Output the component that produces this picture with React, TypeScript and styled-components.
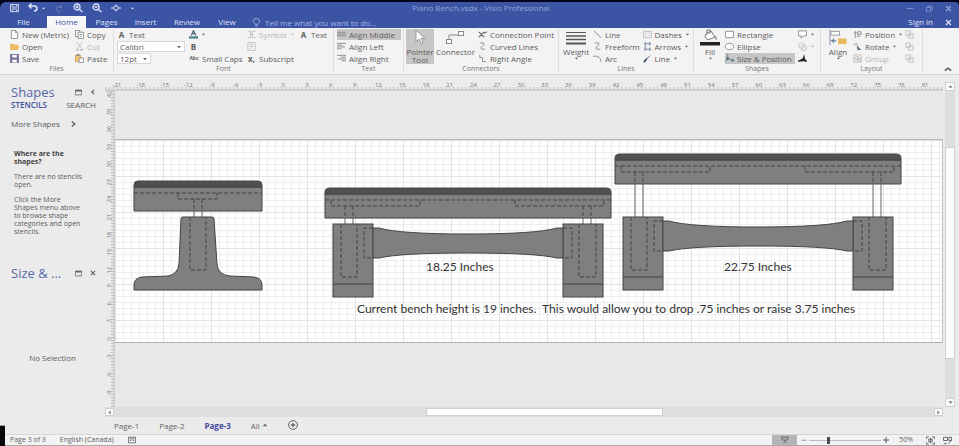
import React from "react";
import styled, { createGlobalStyle, css } from "styled-components";

const Global = createGlobalStyle`
  * { box-sizing: border-box; }
  html, body { margin: 0; background: #000; }
  body, button, input, select {
    font-family: "Open Sans", "Noto Sans", sans-serif;
    font-size: 8px;
    line-height: 11px;
    color: #5c5c5c;
  }
  button, input, select { margin: 0; padding: 0; border: 0; background: none; }
  h1, h2, p { margin: 0; }
`;

const Shell = styled.div`
  min-height: 100vh;
  display: flex;
  flex-direction: column;
  background: #ebebeb;
  border-top: 2px solid #04051c;
  overflow: hidden;
`;

/* ---------- title bar and tabs ---------- */

const Header = styled.header`
  background: #3c54a4;
  color: #dfe4f5;
  border-radius: 6px 4px 0 0;
  box-shadow: 0 -6px 0 #04051c;
`;

const TitleRow = styled.div`
  display: grid;
  grid-template-columns: 1fr auto 1fr;
  align-items: center;
  height: 12px;
  padding: 0 7px 0 10px;
`;

const QuickBar = styled.div`
  display: flex;
  align-items: center;
  gap: 9px;
  height: 8px;
`;

const WindowTitle = styled.h1`
  font-size: 8px;
  line-height: 12px;
  font-weight: 400;
  color: #93a3da;
`;

const WindowButtons = styled(QuickBar)`
  justify-content: flex-end;
  gap: 12px;
  color: #93a3da;
`;

const IconButton = styled.button<{ $dim?: boolean }>`
  display: inline-flex;
  align-items: center;
  gap: 3px;
  color: inherit;
  opacity: ${(p) => (p.$dim ? 0.3 : 1)};
`;

const TabRow = styled.nav`
  display: flex;
  align-items: flex-end;
  height: 14px;
`;

const Tab = styled.button<{ $active?: boolean; $width: number }>`
  width: ${(p) => p.$width}px;
  height: 12px;
  line-height: 12px;
  color: ${(p) => (p.$active ? "#3c54a4" : "#dfe4f5")};
  background: ${(p) => (p.$active ? "#f7f7f9" : "transparent")};
`;

const Tell = styled.label`
  display: flex;
  align-items: center;
  gap: 4px;
  height: 12px;
  margin-left: 8px;
  flex: 1;
  color: #a7b4e2;
  input {
    width: 160px;
    color: #a7b4e2;
    outline: none;
  }
  input::placeholder { color: #a7b4e2; opacity: 1; }
`;

const SignIn = styled.a`
  color: #e6eaf8;
  text-decoration: none;
  line-height: 12px;
  margin-right: 12px;
`;

const CloseDoc = styled(IconButton)`
  height: 12px;
  margin-right: 7px;
`;

/* ---------- ribbon ---------- */

const Ribbon = styled.section`
  display: flex;
  height: 47px;
  background: #f3f3f3;
  border-bottom: 1px solid #d4d4d4;
`;

const GroupBox = styled.div<{ $width: number }>`
  flex: 0 0 ${(p) => p.$width}px;
  display: flex;
  flex-direction: column;
  margin: 1px 0 2px;
  border-right: 1px solid #dedede;
`;

const GroupBody = styled.div`
  display: flex;
  height: 35px;
`;

const GroupName = styled.div`
  text-align: center;
  line-height: 9px;
  font-size: 7px;
  color: #777;
`;

const Column = styled.div<{ $width: number; $gap?: number }>`
  flex: 0 0 ${(p) => p.$width}px;
  display: flex;
  flex-direction: column;
  align-items: flex-start;
  gap: 1px;
  margin-left: ${(p) => p.$gap ?? 0}px;
`;

const Command = styled.button<{ $active?: boolean; $disabled?: boolean; $fill?: boolean }>`
  display: flex;
  align-items: center;
  gap: 3px;
  height: 11px;
  white-space: nowrap;
  ${(p) => p.$fill && css`width: 100%;`}
  ${(p) => p.$disabled && css`color: #b4b4b4;`}
  ${(p) => p.$active && css`background: #c6c6c6;`}
`;

const Tall = styled.button<{ $active?: boolean; $width: number; $gap: number }>`
  flex: 0 0 ${(p) => p.$width}px;
  margin-left: ${(p) => p.$gap}px;
  display: flex;
  flex-direction: column;
  align-items: center;
  height: 35px;
  line-height: 8px;
  background: ${(p) => (p.$active ? "#c6c6c6" : "transparent")};
  svg:first-child { margin-bottom: 2px; }
`;

const PickerBox = styled.label<{ $width: number }>`
  display: flex;
  align-items: center;
  width: ${(p) => p.$width}px;
  height: 11px;
  background: #fdfdfd;
  border: 1px solid #d8d8d8;
  padding: 0 2px;
  select {
    flex: 1;
    min-width: 0;
    appearance: none;
    outline: none;
    line-height: 9px;
    height: 9px;
  }
`;

const Collapse = styled(IconButton)`
  margin-left: auto;
  align-self: flex-end;
  padding: 0 7px 1px 0;
`;

/* ---------- body ---------- */

const Body = styled.main`
  flex: 1;
  display: grid;
  grid-template-columns: 105px minmax(0, 1fr);
`;

const Side = styled.aside`
  display: flex;
  flex-direction: column;
  padding: 9px 9px 0 11px;
`;

const PanelHead = styled.div`
  display: flex;
  align-items: center;
  gap: 8px;
  height: 16px;
  h2 {
    flex: 1;
    font-size: 13px;
    line-height: 16px;
    font-weight: 400;
    color: #5468a8;
    white-space: nowrap;
  }
`;

const PanelTabs = styled.div`
  display: flex;
  justify-content: space-between;
  height: 9px;
  button { line-height: 9px; }
  button:first-child { color: #3f4f9c; font-weight: 600; }
`;

const MoreShapes = styled.button`
  display: flex;
  align-items: center;
  gap: 10px;
  margin: 9px 0 20px;
`;

const Help = styled.div`
  display: flex;
  flex-direction: column;
  gap: 7px;
  padding-left: 3px;
  margin-top: 1px;
  font-size: 7px;
  line-height: 8px;
  height: 115px;
  p { white-space: nowrap; }
  p:first-child { font-weight: 700; color: #444; }
`;

const HelpLine = styled.span`
  display: block;
  height: 8px;
`;

const NoSelection = styled.p`
  margin-top: 71px;
  text-align: center;
  padding-right: 2px;
`;

const Workspace = styled.div`
  display: grid;
  grid-template-columns: 10px minmax(0, 1fr) 16px;
  grid-template-rows: 9px minmax(0, 1fr) 10px 17px;
  padding-top: 7px;
`;

const TopRuler = styled.div`
  grid-column: 1 / 3;
  display: grid;
  grid-template-columns: repeat(35, minmax(0, 1fr));
  padding-right: 6px;
  border-bottom: 2px solid #cfcfcf;
  font-size: 6px;
  line-height: 7px;
  text-align: center;
  color: #777;
  background: repeating-linear-gradient(90deg, #bbb 0 1px, transparent 1px 4px) 0 100% / 100% 2px no-repeat;
`;

const LeftRuler = styled.div`
  display: flex;
  flex-direction: column;
  border-right: 2px solid #cfcfcf;
  font-size: 6px;
  color: #777;
  overflow: hidden;
  background: repeating-linear-gradient(180deg, #bbb 0 1px, transparent 1px 3px) 100% 0 / 2px 100% no-repeat;
  span {
    flex: 1 1 0;
    writing-mode: vertical-rl;
    transform: rotate(180deg);
    text-align: end;
    line-height: 8px;
  }
`;

const Canvas = styled.div`
  background: #e8e8e8;
  padding-top: 48px;
`;

const Sheet = styled.div`
  position: relative;
  height: 204px;
  overflow: hidden;
  border-top: 1px solid #b8b8b8;
  border-bottom: 1px solid #b0b0b0;
  border-right: 1px solid #c4c4c4;
  background:
    repeating-linear-gradient(90deg, #e2e2e2 0 1px, transparent 1px 48px),
    repeating-linear-gradient(180deg, #e2e2e2 0 1px, transparent 1px 36px),
    repeating-linear-gradient(90deg, #eeeeee 0 1px, transparent 1px 8px),
    repeating-linear-gradient(180deg, #eeeeee 0 1px, transparent 1px 6px),
    #fefefe;
  svg { display: block; }
`;

const Note = styled.span<{ $x: number; $y: number }>`
  position: absolute;
  left: ${(p) => p.$x}px;
  top: ${(p) => p.$y}px;
  font-family: Lato, "Open Sans", sans-serif;
  font-size: 12px;
  line-height: 16px;
  color: #333;
  white-space: pre;
`;

const ScrollV = styled.div`
  grid-row: 1 / 4;
  grid-column: 3;
  display: flex;
  flex-direction: column;
  width: 10px;
  margin: 0 0 10px 2px;
  background: #dedede;
`;

const ScrollH = styled.div`
  grid-column: 1 / 3;
  display: flex;
  background: #dedede;
  padding: 1px 0;
`;

const Arrow = styled.button`
  flex: 0 0 9px;
  min-width: 9px;
  display: flex;
  align-items: center;
  justify-content: center;
  background: #fafafa;
  border: 1px solid #d0d0d0;
`;

const Gap = styled.div<{ $grow: number }>`
  flex: ${(p) => p.$grow} 1 0;
`;

const Thumb = styled.div<{ $grow: number }>`
  flex: ${(p) => p.$grow} 1 0;
  background: #fdfdfd;
  border: 1px solid #cfcfcf;
`;

const PageTabs = styled.nav`
  grid-column: 1 / 4;
  display: flex;
  align-items: center;
  gap: 20px;
  padding: 0 0 1px 9px;
`;

const PageTab = styled.button<{ $active?: boolean }>`
  display: flex;
  align-items: center;
  gap: 2px;
  color: ${(p) => (p.$active ? "#3f4a9e" : "#666")};
  font-weight: ${(p) => (p.$active ? 700 : 400)};
`;

const Status = styled.footer`
  position: relative;
  display: flex;
  align-items: center;
  height: 12px;
  padding: 0 7px 0 10px;
  background: #f2f2f2;
  border-top: 1px solid #d6d6d6;
  border-bottom: 1px solid #a9a9a9;
  font-size: 7px;
  line-height: 10px;
  &::before {
    content: "";
    position: absolute;
    left: 0;
    bottom: -1px;
    width: 5px;
    height: 20px;
    background: #080808;
    border-top: 1px solid #999;
  }
`;

const StatusText = styled.span`
  margin-right: 14px;
`;

const Presentation = styled.button`
  display: flex;
  align-items: center;
  justify-content: center;
  width: 25px;
  height: 10px;
  margin-left: auto;
  margin-right: 4px;
  background: #b5b5b5;
`;

const Zoom = styled.input`
  appearance: none;
  width: 72px;
  height: 10px;
  margin: 0 2px;
  outline: none;
  background: linear-gradient(#bbb, #bbb) center / 100% 1px no-repeat;
  &::-webkit-slider-thumb {
    appearance: none;
    width: 3px;
    height: 7px;
    background: #4a4a4a;
  }
`;

const Percent = styled.span`
  margin: 0 13px 0 10px;
`;

const StatusIcons = styled.div`
  display: flex;
  gap: 8px;
`;

/* ---------- icons ---------- */

const G = "#8a8a8a";
const L = "#bdbdbd";

const art: Record<string, React.ReactNode> = {
  save: <><path d="M.5 .5H9.5V8.5H.5Z" /><path d="M2.5 .5V3.5H7.5V.5M2.5 8.5V5.5H7.5V8.5" /></>,
  undo: <path d="M3.5 .5L1 3L3.5 5.5M1 3H6Q9 3 9 5.5T6 8" strokeWidth="1.5" />,
  redo: <path d="M7 1V4H4M7 4A3 3 0 1 0 7 7" />,
  zoomIn: <><circle cx="4" cy="4" r="3" strokeWidth="1.3" /><path d="M6.3 6.3L9.5 9M2.5 4H5.5M4 2.5V5.5" strokeWidth="1.3" /></>,
  zoomOut: <><circle cx="4" cy="4" r="3" strokeWidth="1.3" /><path d="M6.3 6.3L9.5 9M2.5 4H5.5" strokeWidth="1.3" /></>,
  touch: <><ellipse cx="5" cy="5" rx="2.5" ry="2" /><path d="M0 5H2.5M7.5 5H10M5 1.5V3M5 7V8.5" /></>,
  caret: <path d="M2 3.5H8L5 7Z" fill="currentColor" stroke="none" />,
  up: <path d="M1 7H9L5 3Z" fill="currentColor" stroke="none" />,
  chevUp: <path d="M1 7L5 4L9 7" strokeWidth="2" />,
  left: <path d="M7 1V9L3 5Z" fill="currentColor" stroke="none" />,
  right: <path d="M3 1V9L7 5Z" fill="currentColor" stroke="none" />,
  down: <path d="M1 3H9L5 7Z" fill="currentColor" stroke="none" />,
  chevRight: <path d="M3 1L8 5L3 9" strokeWidth="2.2" />,
  chevLeft: <path d="M7 1.5L3 5L7 8.5" strokeWidth="2" />,
  min: <path d="M1 5.5H9" />,
  restore: <path d="M.5 3.5H6.5V9.5H.5ZM3 3.5V1.5H9V7H6.5" />,
  close: <path d="M1.5 1.5L8.5 8.5M8.5 1.5L1.5 8.5" strokeWidth="1.8" />,
  bulb: <><path d="M3.5 7C3.5 5.5 1.5 5 1.5 3.5A3.5 3 0 0 1 8.5 3.5C8.5 5 6.5 5.5 6.5 7Z" /><path d="M3.5 9H6.5" /></>,
  page: <path d="M1.5 .5H6L8.5 3V9.5H1.5ZM6 .5V3H8.5" stroke={G} fill="#fff" />,
  open: <path d="M0 2H4L5 3H9V4.5H10L9 9H0Z" fill="#eebc62" stroke="none" />,
  saveC: <><path d="M.5 .5H9.5V9.5H.5Z" fill="#77739c" stroke="#77739c" /><path d="M2.5 1H7.5V4H2.5ZM2.5 6.5H7.5V9.5H2.5Z" fill="#fff" stroke="none" /></>,
  copy: <><path d="M.5 .5H5.5V7.5H.5Z" stroke={G} /><path d="M3.5 2.5H9.5V9.5H3.5Z" fill="#fff" stroke={G} /><path d="M5 5H8M5 7H8" stroke={G} /></>,
  cut: <path d="M2 0L7 7M8 0L3 7M1.5 8A1.3 1.3 0 1 0 4 8ZM6 8A1.3 1.3 0 1 0 8.5 8Z" stroke={L} />,
  paste: <><path d="M.5 1.5H6.5V8.5H.5Z" fill="#efc57e" stroke="#d7a34e" /><path d="M2 0H5V2H2Z" fill={G} stroke="none" /><path d="M4.5 4.5H9.5V9.5H4.5Z" fill="#fff" stroke={G} /></>,
  colorA: <><path d="M2.5 6L5 .5L7.5 6M3.5 4H6.5" stroke="#4b6877" strokeWidth="1.3" /><path d="M0 7H10V9.5H0Z" fill="#4e7f86" stroke="none" /></>,
  symbol: <path d="M.5 1.5H4V8.5H.5M9.5 1.5H6V8.5H9.5M4 5H6" stroke={L} />,
  textBox: <path d="M1 .5H9V9.5H1ZM3 3H7M3 5H7M3 7H5" stroke={L} />,
  alignL: <path d="M0 1.5H10M0 3.5H6M0 5.5H9M0 7.5H5" stroke={G} />,
  alignM: <path d="M0 2.5H10M0 4.5H10M0 6.5H10" stroke={G} />,
  alignR: <path d="M0 1.5H10M4 3.5H10M1 5.5H10M5 7.5H10" stroke={G} />,
  cross: <path d="M1 2L7 8M7 2L1 8M7 3.5L9.5 2" stroke="#666" strokeWidth="1.3" />,
  curve: <path d="M2 1H6Q8 3 5 4.5T4 8H8" stroke={G} />,
  angle: <path d="M2 1V4H5V8.5H9" stroke={G} />,
  line: <path d="M1 1L9 8.5" stroke={G} />,
  arc: <path d="M0 2.5Q8 1 9 8.5" stroke={G} />,
  dashes: <path d="M.5 1.5H9.5V8.5H.5ZM2 3.5H4M6 3.5H8M2 6H4M6 6H8" stroke={L} />,
  arrows: <path d="M1 2H9M1 8H9M2.500 0V4M7.500 0V4M2.500 4V10M7.500 6V10" stroke="#7387a0" />,
  pen: <path d="M9.5 .5L5 5L3 9L0 9.5L2 6L5 4Z" fill="#42526b" stroke="none" />,
  rect: <path d="M.5 1.5H9.5V8.5H.5Z" stroke={G} fill="#fff" />,
  ellipse: <ellipse cx="5" cy="5" rx="4.5" ry="3.5" stroke={G} fill="#fff" />,
  sizePos: <><path d="M3 0V5L0 9M3 5L9 7" stroke="#6b7d8c" /><circle cx="3" cy="5" r="1.5" fill="#4b6877" stroke="none" /><circle cx="8.500" cy="7" r="1.300" fill="#4b6877" stroke="none" /></>,
  callout: <path d="M.5 1H9.5V6.5H6L3.5 9V6.5H.5Z" stroke={G} fill="#fff" />,
  union: <><circle cx="4" cy="4" r="3" stroke={L} /><circle cx="6.5" cy="6.5" r="3" stroke={L} /></>,
  jet: <path d="M7 0L7.5 5L10 8V9L6.5 8L0 8.5V7.5L5 5Z" fill="#222" stroke="none" />,
  position: <path d="M1 3H4M2.5 1V9M5 2H9V5H5ZM4 7H8" stroke={G} />,
  rotate: <><path d="M1 4Q2 1 5 2" stroke={G} /><path d="M4 3L9 9H5Z" fill="#566d80" stroke="none" /></>,
  group: <path d="M1 1H9V9H1ZM3 3H6V6H3ZM5 5H8V8H5Z" stroke={L} />,
  front: <path d="M1 1H6V6H1ZM4 4H9V9H4Z" stroke={L} fill="#f3f3f3" />,
  win: <><path d="M.5 1.5H9.5V8.5H.5Z" /><path d="M.5 2.5H9.5" strokeWidth="2" /></>,
  plus: <><circle cx="5" cy="5" r="4.4" /><path d="M2.8 5H7.2M5 2.8V7.2" strokeWidth="1.3" /></>,
  macro: <path d="M.5 1.5H9.5V8.5H.5ZM2 3.5H8M2 5.5H4M6 5.5H8" />,
  fit: <path d="M.5 3V1H3M7 1H9.5V3M9.5 7V9H7M3 9H.5V7M3 3.5H7V6.5H3ZM5 2V8" />,
  panes: <path d="M.5 1.5H5V5H.5ZM6.5 1.5H9.5V5H6.5ZM1 8.5H4M6 8.5L9 5.5" />,
  present: <path d="M0 1.5H10M1.5 2V5H8.5V2M5 5V7L3 9M5 7L7 9" />,
};

const Icon = ({ n, s = 9 }: { n: string; s?: number }) => (
  <svg width={s} height={s} viewBox="0 0 10 10" fill="none" stroke="currentColor" aria-hidden="true">
    {art[n]}
  </svg>
);

const LetterA = styled.b<{ $small?: boolean }>`
  width: ${(p) => (p.$small ? 10 : 9)}px;
  font-size: ${(p) => (p.$small ? 5 : 8)}px;
  text-align: center;
`;

type CmdProps = {
  icon?: string;
  text?: string;
  drop?: boolean;
  active?: boolean;
  disabled?: boolean;
  fill?: boolean;
  label?: string;
  lead?: React.ReactNode;
};

const Cmd = ({ icon, text, drop, active, disabled, fill, label, lead }: CmdProps) => (
  <Command $active={active} $disabled={disabled} $fill={fill} aria-label={label}>
    {lead}
    {icon && <Icon n={icon} />}
    {text && <span>{text}</span>}
    {drop && <Icon n="caret" s={5} />}
  </Command>
);

const Group = ({ name, width, children }: { name: string; width: number; children: React.ReactNode }) => (
  <GroupBox $width={width}>
    <GroupBody>{children}</GroupBody>
    <GroupName>{name}</GroupName>
  </GroupBox>
);

const Picker = ({ label, value, width }: { label: string; value: string; width: number }) => (
  <PickerBox $width={width}>
    <select aria-label={label} defaultValue={value}><option>{value}</option></select>
    <Icon n="caret" s={6} />
  </PickerBox>
);

const HelpText = ({ lines }: { lines: string[] }) => (
  <p>{lines.map((line) => <HelpLine key={line}>{line}</HelpLine>)}</p>
);

/* ---------- drawing ---------- */

const FILL = "#7f7f7f";
const INK = "#444";

const FrontBench = ({ x, seat, leg }: { x: number; seat: number; leg: number }) => (
  <g transform={`translate(${x} 0)`} stroke={INK} fill={FILL}>
    {[20, 258].map((p) => (
      <path key={p} d={`M${p} ${seat + 30}V${leg}M${p + 8} ${seat + 30}V${leg}`} stroke="#666" />
    ))}
    <path d={`M0 ${seat + 6}V${seat + 30}H286V${seat + 6}Z`} />
    <path d={`M0 ${seat + 6}V${seat + 4}Q0 ${seat} 5 ${seat}H281Q286 ${seat} 286 ${seat + 4}V${seat + 6}Z`} fill="#505050" />
    <rect x="8" y={leg} width="40" height="73" />
    <rect x="238" y={leg} width="40" height="73" />
    <path d={`M8 ${leg + 60}H48M238 ${leg + 60}H278`} />
    <path
      d={`M48 ${leg + 4}H54Q75 ${leg + 10} 143 ${leg + 10}Q211 ${leg + 10} 232 ${leg + 4}H238V${leg + 34}H232Q211 ${leg + 29} 143 ${leg + 29}Q75 ${leg + 29} 54 ${leg + 34}H48Z`}
    />
    <g fill="none" strokeDasharray="4 2">
      <path d={`M0 ${seat + 12}H286M6 ${seat + 12}V${seat + 18}H95V${seat + 12}M190 ${seat + 12}V${seat + 18}H279V${seat + 12}`} />
      <path d={`M20 ${seat + 18}V${seat + 30}M28 ${seat + 18}V${seat + 30}M258 ${seat + 18}V${seat + 30}M266 ${seat + 18}V${seat + 30}`} />
      <path d={`M16 ${leg}V${leg + 53}H32V${leg}M254 ${leg}V${leg + 53}H271V${leg}`} />
      <path d={`M48 ${leg + 4}H39V${leg + 34}H48M238 ${leg + 4}H247V${leg + 34}H238`} />
    </g>
  </g>
);

const SideBench = () => (
  <g stroke={INK} fill={FILL}>
    <path d="M194 211V217M202 211V217" stroke="#666" />
    <path d="M134 187V211H262V187Z" />
    <path d="M134 187V185Q134 181 138 181H258Q262 181 262 185V187Z" fill="#505050" />
    <path d="M183 217H212Q214 217 214 219L217 264Q218 275 230 276L254 277Q262 278 262 285V290H134V285Q134 278 142 277L168 276Q178 274 179 264L181 219Q181 217 183 217Z" />
    <path
      d="M134 193H262M178 193V199H217V193M194 199V211M202 199V211M190 217V270H206V217"
      fill="none"
      strokeDasharray="4 2"
    />
  </g>
);

const rulerX = Array.from({ length: 35 }, (_, i) => -21 + i * 3);
const rulerY = Array.from({ length: 18 }, (_, i) => 42 - i * 3);

export default function App() {
  return (
    <Shell>
      <Global />
      <Header>
        <TitleRow>
          <QuickBar>
            <IconButton aria-label="Save"><Icon n="save" /></IconButton>
            <IconButton aria-label="Undo"><Icon n="undo" s={10} /><Icon n="caret" s={5} /></IconButton>
            <IconButton aria-label="Redo" $dim><Icon n="redo" /></IconButton>
            <IconButton aria-label="Zoom in"><Icon n="zoomIn" s={10} /></IconButton>
            <IconButton aria-label="Zoom out"><Icon n="zoomOut" s={10} /></IconButton>
            <IconButton aria-label="Touch mode"><Icon n="touch" s={10} /></IconButton>
            <IconButton aria-label="Customize toolbar"><Icon n="caret" s={5} /></IconButton>
          </QuickBar>
          <WindowTitle>Piano Bench.vsdx - Visio Professional</WindowTitle>
          <WindowButtons>
            <IconButton aria-label="Minimize"><Icon n="min" s={8} /></IconButton>
            <IconButton aria-label="Restore"><Icon n="restore" s={7} /></IconButton>
            <IconButton aria-label="Close"><Icon n="close" s={7} /></IconButton>
          </WindowButtons>
        </TitleRow>
        <TabRow>
          <Tab $width={47}>File</Tab>
          <Tab $width={39} $active>Home</Tab>
          <Tab $width={41}>Pages</Tab>
          <Tab $width={37}>Insert</Tab>
          <Tab $width={46}>Review</Tab>
          <Tab $width={34}>View</Tab>
          <Tell>
            <Icon n="bulb" />
            <input placeholder="Tell me what you want to do..." aria-label="Tell me what you want to do" />
          </Tell>
          <SignIn href="#">Sign in</SignIn>
          <CloseDoc aria-label="Close document"><Icon n="close" s={7} /></CloseDoc>
        </TabRow>
      </Header>

      <Ribbon>
        <Group name="Files" width={114}>
          <Column $width={64} $gap={10}>
            <Cmd icon="page" text="New (Metric)" />
            <Cmd icon="open" text="Open" />
            <Cmd icon="saveC" text="Save" />
          </Column>
          <Column $width={36} $gap={1}>
            <Cmd icon="copy" text="Copy" />
            <Cmd icon="cut" text="Cut" disabled />
            <Cmd icon="paste" text="Paste" />
          </Column>
        </Group>
        <Group name="Font" width={220}>
          <Column $width={68} $gap={3}>
            <Cmd lead={<LetterA>A</LetterA>} text="Text" />
            <Picker label="Font" value="Calibri" width={68} />
            <Picker label="Font size" value="12pt" width={34} />
          </Column>
          <Column $width={54} $gap={4}>
            <Cmd icon="colorA" drop label="Font color" />
            <Cmd lead={<LetterA>B</LetterA>} label="Bold" />
            <Cmd lead={<LetterA $small>Abc</LetterA>} text="Small Caps" />
          </Column>
          <Column $width={48} $gap={4}>
            <Cmd icon="symbol" text="Symbol" drop disabled />
            <Cmd icon="textBox" label="Insert field" disabled />
            <Cmd lead={<LetterA>x,</LetterA>} text="Subscript" />
          </Column>
          <Column $width={30} $gap={4}>
            <Cmd lead={<LetterA>A</LetterA>} text="Text" />
          </Column>
        </Group>
        <Group name="Text" width={70}>
          <Column $width={64} $gap={3}>
            <Cmd icon="alignM" text="Align Middle" active fill />
            <Cmd icon="alignL" text="Align Left" />
            <Cmd icon="alignR" text="Align Right" />
          </Column>
        </Group>
        <Group name="Connectors" width={155}>
          <Tall $width={28} $gap={2} $active>
            <svg width="16" height="17" viewBox="0 0 16 17"><path d="M4 1V13L7 10L9 15L11 14L9 9.5H13Z" fill="#fff" stroke="#999" /></svg>
            <span>Pointer<br />Tool</span>
          </Tall>
          <Tall $width={38} $gap={2}>
            <svg width="20" height="17" viewBox="0 0 20 17" fill="#fff" stroke="#8a8a8a"><path d="M4 11V6H14" fill="none" /><rect x="1.5" y="10.5" width="5" height="4" /><rect x="13.5" y="2.5" width="5" height="4" /></svg>
            <span>Connector</span>
          </Tall>
          <Column $width={76} $gap={3}>
            <Cmd icon="cross" text="Connection Point" />
            <Cmd icon="curve" text="Curved Lines" />
            <Cmd icon="angle" text="Right Angle" />
          </Column>
        </Group>
        <Group name="Lines" width={135}>
          <Tall $width={28} $gap={3}>
            <svg width="20" height="17" viewBox="0 0 20 17" stroke="#555"><path d="M0 3.5H20" /><path d="M0 7H20" strokeWidth="1.5" /><path d="M0 10.5H20" strokeWidth="1.5" /><path d="M0 14.5H20" strokeWidth="2" /></svg>
            <span>Weight</span>
            <Icon n="caret" s={5} />
          </Tall>
          <Column $width={46} $gap={3}>
            <Cmd icon="line" text="Line" />
            <Cmd icon="curve" text="Freeform" />
            <Cmd icon="arc" text="Arc" />
          </Column>
          <Column $width={46} $gap={3}>
            <Cmd icon="dashes" text="Dashes" drop />
            <Cmd icon="arrows" text="Arrows" drop />
            <Cmd icon="pen" text="Line" drop />
          </Column>
        </Group>
        <Group name="Shapes" width={127}>
          <Tall $width={22} $gap={5}>
            <svg width="20" height="17" viewBox="0 0 20 17"><path d="M6 5L11 2L15 8L8 11L5 8Z" fill="#fff" stroke="#777" /><path d="M7 6V1H10V5M15 7Q17 9 16 11" fill="none" stroke="#777" /><path d="M0 13H20V16.5H0Z" fill="#222" /></svg>
            <span>Fill</span>
            <Icon n="caret" s={5} />
          </Tall>
          <Column $width={70} $gap={4}>
            <Cmd icon="rect" text="Rectangle" />
            <Cmd icon="ellipse" text="Ellipse" />
            <Cmd icon="sizePos" text="Size & Position" active fill />
          </Column>
          <Column $width={22} $gap={3}>
            <Cmd icon="callout" drop label="Callout" />
            <Cmd icon="union" drop disabled label="Combine" />
            <Cmd icon="jet" label="Effects" />
          </Column>
        </Group>
        <Group name="Layout" width={102}>
          <Tall $width={24} $gap={5}>
            <svg width="20" height="17" viewBox="0 0 20 18"><path d="M1.5 1V17" stroke="#7b8fa8" /><rect x="2.5" y="2.5" width="9" height="4" fill="#fff" stroke="#999" /><rect x="10" y="10" width="9" height="6" fill="#e8b95c" /><path d="M3 12.5H8M6 10L3.5 12.5L6 15" fill="none" stroke="#3d5c8a" /></svg>
            <span>Align</span>
            <Icon n="caret" s={5} />
          </Tall>
          <Column $width={50} $gap={3}>
            <Cmd icon="position" text="Position" drop />
            <Cmd icon="rotate" text="Rotate" drop />
            <Cmd icon="group" text="Group" disabled />
          </Column>
          <Column $width={12} $gap={2}>
            <Cmd icon="front" label="Bring to front" />
            <Cmd icon="front" label="Send to back" />
            <Cmd icon="front" label="Layers" />
          </Column>
        </Group>
        <Collapse aria-label="Collapse ribbon"><Icon n="chevUp" s={8} /></Collapse>
      </Ribbon>

      <Body>
        <Side>
          <PanelHead>
            <h2>Shapes</h2>
            <IconButton aria-label="Dock"><Icon n="win" s={7} /></IconButton>
            <IconButton aria-label="Collapse"><Icon n="chevLeft" s={6} /></IconButton>
          </PanelHead>
          <PanelTabs><button>STENCILS</button><button>SEARCH</button></PanelTabs>
          <MoreShapes>More Shapes <Icon n="chevRight" s={6} /></MoreShapes>
          <Help>
            <HelpText lines={["Where are the", "shapes?"]} />
            <HelpText lines={["There are no stencils", "open."]} />
            <HelpText lines={["Click the More", "Shapes menu above", "to browse shape", "categories and open", "stencils."]} />
          </Help>
          <PanelHead>
            <h2>Size &amp; ...</h2>
            <IconButton aria-label="Float"><Icon n="win" s={7} /></IconButton>
            <IconButton aria-label="Close panel"><Icon n="close" s={6} /></IconButton>
          </PanelHead>
          <NoSelection>No Selection</NoSelection>
        </Side>

        <Workspace>
          <TopRuler>{rulerX.map((n) => <span key={n}>{n}</span>)}</TopRuler>
          <LeftRuler>{rulerY.map((n) => <span key={n}>{n}</span>)}</LeftRuler>
          <Canvas>
            <Sheet>
              <svg width="828" height="203" viewBox="115 140 828 203" aria-label="Piano bench drawing">
                <SideBench />
                <FrontBench x={325} seat={188} leg={224} />
                <FrontBench x={615} seat={154} leg={217} />
              </svg>
              <Note $x={311} $y={119}>18.25 Inches</Note>
              <Note $x={609} $y={119}>22.75 Inches</Note>
              <Note $x={242} $y={161}>{"Current bench height is 19 inches.  This would allow you to drop .75 inches or raise 3.75 inches"}</Note>
            </Sheet>
          </Canvas>
          <ScrollV>
            <Arrow aria-label="Scroll up"><Icon n="up" s={5} /></Arrow>
            <Gap $grow={56} /><Thumb $grow={212} /><Gap $grow={39} />
            <Arrow aria-label="Scroll down"><Icon n="down" s={5} /></Arrow>
          </ScrollV>
          <ScrollH>
            <Arrow aria-label="Scroll left"><Icon n="left" s={5} /></Arrow>
            <Gap $grow={313} /><Thumb $grow={235} /><Gap $grow={272} />
            <Arrow aria-label="Scroll right"><Icon n="right" s={5} /></Arrow>
          </ScrollH>
          <PageTabs>
            <PageTab>Page-1</PageTab>
            <PageTab>Page-2</PageTab>
            <PageTab $active>Page-3</PageTab>
            <PageTab>All <Icon n="up" s={6} /></PageTab>
            <PageTab aria-label="Insert page"><Icon n="plus" s={10} /></PageTab>
          </PageTabs>
        </Workspace>
      </Body>

      <Status>
        <StatusText>Page 3 of 3</StatusText>
        <StatusText>English (Canada)</StatusText>
        <IconButton aria-label="Record macro"><Icon n="macro" s={8} /></IconButton>
        <Presentation aria-label="Presentation mode"><Icon n="present" s={8} /></Presentation>
        <IconButton aria-label="Zoom out"><Icon n="min" s={6} /></IconButton>
        <Zoom type="range" min={0} max={100} defaultValue={26} aria-label="Zoom level" />
        <IconButton aria-label="Zoom in"><svg width="6" height="6" viewBox="0 0 6 6" stroke="#555"><path d="M0 3H6M3 0V6" /></svg></IconButton>
        <Percent>50%</Percent>
        <StatusIcons>
          <IconButton aria-label="Fit page"><Icon n="fit" /></IconButton>
          <IconButton aria-label="Switch windows"><Icon n="panes" /></IconButton>
        </StatusIcons>
      </Status>
    </Shell>
  );
}
